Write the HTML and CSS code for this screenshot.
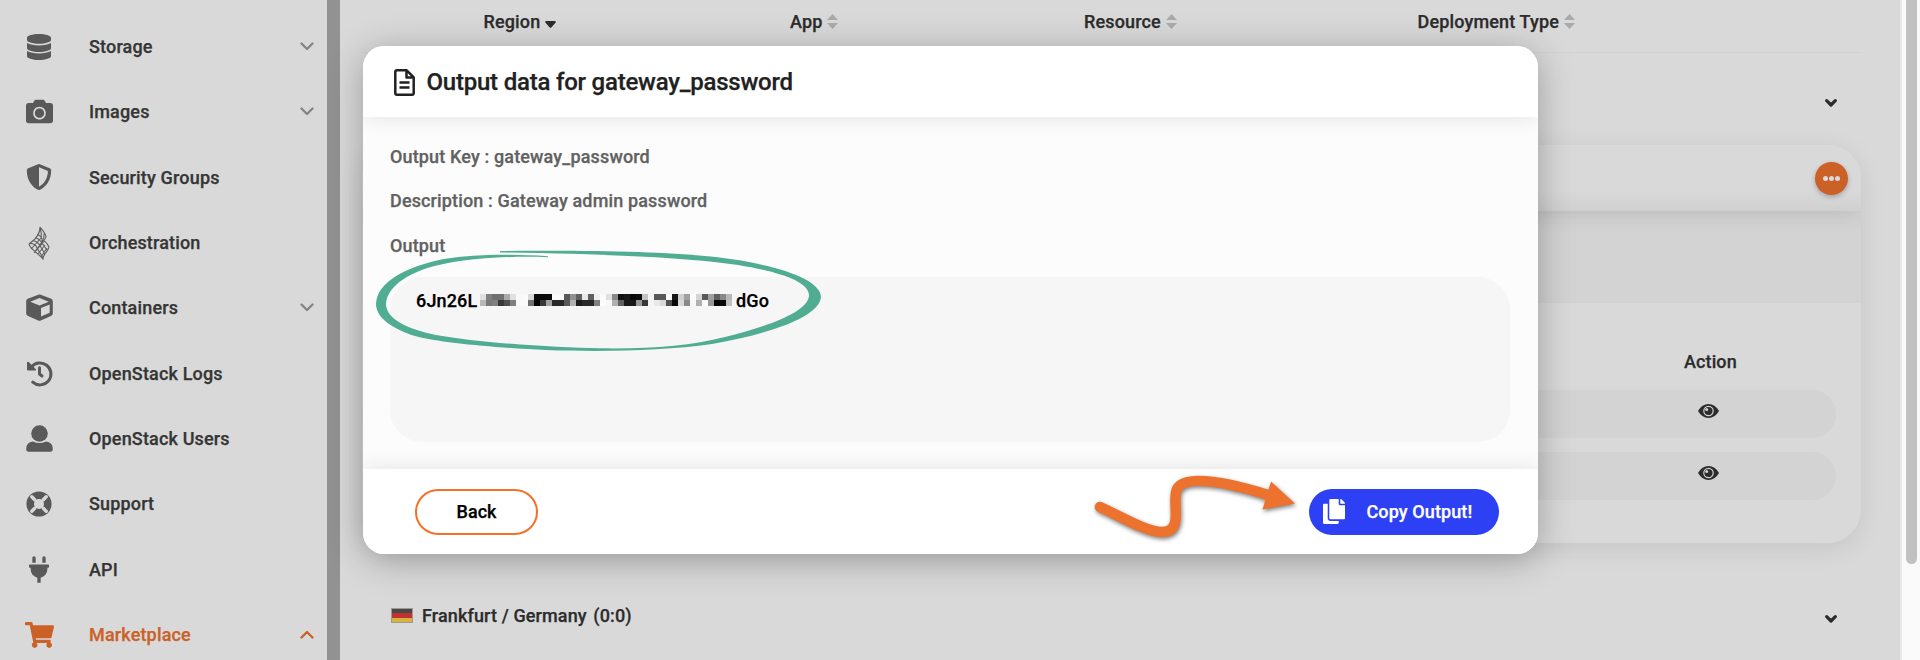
FILE: index.html
```html
<!DOCTYPE html>
<html lang="en">
<head>
<meta charset="utf-8">
<title>Marketplace</title>
<link rel="stylesheet" href="styles.css">
</head>
<body>
<div class="app">
  <nav class="sidebar">
    <a class="item"><span class="icon"><svg width="24" height="26" viewBox="0 0 448 512" preserveAspectRatio="none"><path d="M448 73.143v45.714C448 159.143 347.667 192 224 192S0 159.143 0 118.857V73.143C0 32.857 100.333 0 224 0s224 32.857 224 73.143zM448 176v102.857C448 319.143 347.667 352 224 352S0 319.143 0 278.857V176c48.125 33.143 136.208 48.572 224 48.572S399.874 209.143 448 176zm0 160v102.857C448 479.143 347.667 512 224 512S0 479.143 0 438.857V336c48.125 33.143 136.208 48.572 224 48.572S399.874 369.143 448 336z"/></svg></span><span class="label">Storage</span><svg class="chev" width="14" height="9" viewBox="0 0 14 9"><path d="M1.5 1.5 7 7 12.5 1.5"/></svg></a>
    <a class="item"><span class="icon"><svg width="27" height="27" viewBox="0 0 512 512"><path d="M512 144v288c0 26.500-21.500 48-48 48H48c-26.500 0-48-21.500-48-48V144c0-26.500 21.500-48 48-48h88l12.300-32.900c7-18.700 24.900-31.100 44.900-31.100h125.500c20 0 37.900 12.400 44.900 31.100L376 96h88c26.500 0 48 21.500 48 48zM376 288c0-66.200-53.800-120-120-120s-120 53.800-120 120 53.800 120 120 120 120-53.800 120-120zm-32 0c0 48.500-39.500 88-88 88s-88-39.500-88-88 39.500-88 88-88 88 39.500 88 88z"/></svg></span><span class="label">Images</span><svg class="chev" width="14" height="9" viewBox="0 0 14 9"><path d="M1.5 1.5 7 7 12.5 1.5"/></svg></a>
    <a class="item"><span class="icon"><svg width="26" height="26" viewBox="0 0 512 512"><path d="M466.500 83.700l-192-80a48.150 48.150 0 0 0-36.900 0l-192 80C27.700 91.100 16 108.600 16 128c0 198.500 114.500 335.700 221.500 380.300 11.800 4.900 25.100 4.900 36.900 0C360.100 472.600 496 349.300 496 128c0-19.400-11.700-36.900-29.500-44.300zM256.100 446.300l-.1-381 175.900 73.300c-3.300 151.400-82.100 261.100-175.800 307.700z"/></svg></span><span class="label">Security Groups</span></a>
    <a class="item"><span class="icon"><svg class="mesh" width="22" height="34" viewBox="0 0 22 34"><path d="M12 1c4 5 6 7 6 10M12 1c0 6-2 8-5 12L1 18M12 1c1 5 2 7 1 11L3 23M16 6c1 5-1 7-2 10L6 27M18 11l-4 7-6 6M1 18c0 4 9 9 14 15 0-5 5-7 6-12-2-4-5-7-8-7M1 18c3-2 5 0 7 2l7 12M4 15c3-1 5 1 7 3l6 10M7 12c3 0 5 2 7 5l5 7M9 9c3 0 4 1 5 4M8 25l6-8M10 28l7-9M13 31l6-9"/></svg></span><span class="label">Orchestration</span></a>
    <a class="item"><span class="icon"><svg width="27" height="27" viewBox="0 0 27 27"><path fill-rule="evenodd" d="M12.300.8q1.200-.6 2.400 0l10.600 4q1.500.7 1.500 2.200v12.600q0 1.500-1.400 2.200l-10.600 4.600q-1.300.5-2.600 0L1.600 21.800Q.2 21.100.2 19.600V7q0-1.500 1.500-2.200zM13.500 4 4.200 7.700l9.300 3.800 9.300-3.800zM15 14v8.500l8.700-3.800v-8.200z"/></svg></span><span class="label">Containers</span><svg class="chev" width="14" height="9" viewBox="0 0 14 9"><path d="M1.500 1.500 7 7 12.500 1.500"/></svg></a>
    <a class="item"><span class="icon"><svg class="line" width="27" height="27" viewBox="0 0 27 27"><path stroke-width="3" stroke-linecap="round" d="M5 7.500A11 11 0 1 1 6.700 22.200"/><path stroke-width="3" stroke-linecap="round" stroke-linejoin="round" d="M13.500 7.800V14L16 16"/><path class="solid" d="M1 2.200q.7-1 1.700-.2l7.200 7.200q.6 1-.6 1.200H1.800q-.8 0-.8-.8z"/></svg></span><span class="label">OpenStack Logs</span></a>
    <a class="item"><span class="icon"><svg width="27" height="27" viewBox="0 0 27 27"><circle cx="13.500" cy="8.500" r="8.300"/><path d="M7 16.500q6.500 3 13 0 6.800.7 6.800 7.500 0 2.700-2.500 2.700H2.700Q.2 26.700.2 24q0-6.800 6.800-7.500z"/></svg></span><span class="label">OpenStack Users</span></a>
    <a class="item"><span class="icon"><svg width="26" height="26" viewBox="0 0 26 26"><path fill-rule="evenodd" d="M13 .4a12.600 12.600 0 1 0 0 25.200 12.600 12.600 0 0 0 0-25.200zM13 8a5 5 0 1 1 0 10 5 5 0 0 1 0-10z"/><path class="cut" d="m8.700 8.700-2.900-2.900M17.300 8.700l2.900-2.900M8.700 17.300l-2.900 2.900M17.300 17.300l2.900 2.900"/></svg></span><span class="label">Support</span></a>
    <a class="item"><span class="icon"><svg width="20" height="27" viewBox="0 0 384 512"><path d="M320 32a32 32 0 0 0-64 0v96h64zm48 128H16A16 16 0 0 0 0 176v32a16 16 0 0 0 16 16h16v32a160.070 160.070 0 0 0 128 156.800V512h64v-99.200A160.070 160.070 0 0 0 352 256v-32h16a16 16 0 0 0 16-16v-32a16 16 0 0 0-16-16zM128 32a32 32 0 0 0-64 0v96h64z"/></svg></span><span class="label">API</span></a>
    <a class="item active"><span class="icon"><svg width="29" height="26" viewBox="0 0 576 512"><path d="M528.120 301.319l47.273-208C578.806 78.301 567.391 64 551.990 64H159.208l-9.166-44.810C147.758 8.021 137.930 0 126.529 0H24C10.745 0 0 10.745 0 24v16c0 13.255 10.745 24 24 24h69.883l70.248 343.435C147.325 417.100 136 435.222 136 456c0 30.928 25.072 56 56 56s56-25.072 56-56c0-15.674-6.447-29.835-16.824-40h209.647C430.447 426.165 424 440.326 424 456c0 30.928 25.072 56 56 56s56-25.072 56-56c0-22.172-12.888-41.332-31.579-50.405l5.517-24.276c3.413-15.018-8.002-29.319-23.403-29.319H218.117l-6.545-32h293.145c11.206 0 20.920-7.754 23.403-18.681z"/></svg></span><span class="label">Marketplace</span><svg class="chev" width="14" height="9" viewBox="0 0 14 9"><path d="M1.500 7.500 7 2 12.500 7.500"/></svg></a>
  </nav>
  <div class="gutter"></div>

  <main class="main">
    <header class="columns">
      <span class="col region">Region<svg width="11" height="7" viewBox="0 0 11 7"><path d="M1.200 0h8.600q1.500.3.700 1.700L6.500 6.200q-1 1-2 0L.5 1.700Q-.3.300 1.200 0z"/></svg></span>
      <span class="col app-col">App<svg class="sort" width="11" height="15" viewBox="0 0 11 15"><path d="M5.500 0 11 6H0zM0 9h11l-5.500 6z"/></svg></span>
      <span class="col resource">Resource<svg class="sort" width="11" height="15" viewBox="0 0 11 15"><path d="M5.500 0 11 6H0zM0 9h11l-5.500 6z"/></svg></span>
      <span class="col deployment">Deployment Type<svg class="sort" width="11" height="15" viewBox="0 0 11 15"><path d="M5.500 0 11 6H0zM0 9h11l-5.500 6z"/></svg></span>
    </header>
    <div class="group first"><svg class="fold" width="12" height="8" viewBox="0 0 12 8"><path d="M1.700 1.700 6 6l4.300-4.300"/></svg></div>
    <section class="card">
      <div class="card-head"><button class="more"><i></i><i></i><i></i></button></div>
      <div class="card-band"></div>
      <div class="card-body">
        <div class="action">Action</div>
        <div class="row"><svg width="21" height="14" viewBox="0 0 21 14"><path d="M0 7q4-7 10.500-7T21 7q-4 7-10.500 7T0 7z"/><circle class="ring" cx="10.500" cy="7" r="4.700"/><circle class="glint" cx="8.700" cy="5.400" r="1.500"/></svg></div>
        <div class="row"><svg width="21" height="14" viewBox="0 0 21 14"><path d="M0 7q4-7 10.500-7T21 7q-4 7-10.500 7T0 7z"/><circle class="ring" cx="10.500" cy="7" r="4.700"/><circle class="glint" cx="8.700" cy="5.400" r="1.500"/></svg></div>
      </div>
    </section>
    <div class="group last">
      <span class="flag"><i></i><i></i><i></i></span><span class="place">Frankfurt / Germany <span class="count">(0:0)</span></span>
      <svg class="fold" width="12" height="8" viewBox="0 0 12 8"><path d="M1.700 1.700 6 6l4.300-4.300"/></svg>
    </div>
  </main>
  <div class="scroll"><div class="thumb"></div></div>
</div>

<div class="modal">
  <header class="modal-head">
    <svg width="21" height="27" viewBox="0 0 21 27"><path d="M3 1.300h9.700l7 7V24q0 1.700-1.700 1.700H3Q1.300 25.700 1.300 24V3Q1.300 1.300 3 1.300zM12.500 1.500v7h7M5.500 13.500h10M5.500 18.500h10"/></svg>
    <h1>Output data for gateway_password</h1>
  </header>
  <div class="modal-body">
    <p>Output Key : gateway_password</p>
    <p class="desc">Description : Gateway admin password</p>
    <p>Output</p>
    <div class="output"><span class="head">6Jn26L</span><svg class="mask" width="258" height="12" viewBox="0 0 43 2" shape-rendering="crispEdges"></svg><span class="tail">dGo</span></div>
  </div>
  <footer class="modal-foot">
    <button class="back">Back</button>
    <button class="copy"><svg width="22" height="25" viewBox="0 0 448 512" preserveAspectRatio="none"><path d="M320 448v40c0 13.255-10.745 24-24 24H24c-13.255 0-24-10.745-24-24V120c0-13.255 10.745-24 24-24h72v296c0 30.879 25.121 56 56 56h168zm0-344V0H152c-13.255 0-24 10.745-24 24v368c0 13.255 10.745 24 24 24h272c13.255 0 24-10.745 24-24V128H344c-13.200 0-24-10.800-24-24zm120.971-31.029L375.029 7.029A24 24 0 0 0 358.059 0H352v96h96v-6.059a24 24 0 0 0-7.029-16.970z"/></svg><span>Copy Output!</span></button>
  </footer>
</div>

<svg class="marks" width="1920" height="660" viewBox="0 0 1920 660">
  <path class="loop" d="M500 251C600 250 670 252 716 257C775 264 821 279 821 297C819 319 762 335 712 344C664 351 600 352 546 350C500 348 440 343 415 336C393 329 376 318 376 304C377 282 405 267 444 259C475 254 510 254 548 256.200V257.200C510 256 475 258 448 263C410 270 387 286 386 304C386 318 406 329 436 335C480 343 555 347.500 600 348.300C650 349 690 346 725 337C765 327 807 313 809 296C810 281 775 271 738 265C685 257 600 254 500 252.500Z"/>
  <g class="arrow"><path class="shaft" d="M1100 507C1120 516 1146 532 1162 532C1185 532 1171 501 1177 489C1184 475 1220 480 1268 495"/><path d="M1271 481.500 1295 503.500 1262.500 509.500Z"/></g>
</svg>
<script src="mask.js"></script>
</body>
</html>
```
FILE: mask.js
```js
// Grey levels (hex) of the blocks that hide the middle of the password.
const rows = [
  "e0 80 70 70 aa e0 f8 fa d8 0a 0a 0c fb fb 58 90 60 e8 60 f0 fb e0 88 10 18 08 0c c4 f4 58 58 fb 18 d0 a0 fb d4 58 a0 60 88 b8 f7",
  "b8 78 80 38 50 80 fa fa 70 04 38 a0 28 28 58 b0 1c 28 28 80 fc f8 b0 60 18 18 98 38 f4 e8 d8 50 08 d8 88 f7 b0 fa 98 04 08 c0 f7"
];
const mask = document.querySelector(".mask");
rows.forEach((row, y) => row.split(" ").forEach((v, x) => {
  const r = document.createElementNS("http://www.w3.org/2000/svg", "rect");
  r.setAttribute("x", x);
  r.setAttribute("y", y);
  r.setAttribute("width", 1);
  r.setAttribute("height", 1);
  r.setAttribute("fill", "#" + v + v + v);
  mask.appendChild(r);
}));
```
FILE: styles.css
```css
* { box-sizing: border-box; }
body { margin: 0; width: 1920px; height: 660px; overflow: hidden; position: relative; background: #d9d9d9; font-family: Roboto, sans-serif; font-weight: 500; font-size: 18px; color: #2c2c2c; -webkit-text-stroke: .25px; }
svg { display: block; flex: none; }
button { border: 0; padding: 0; font: inherit; }
.app { display: flex; height: 660px; }

.sidebar { width: 327px; padding-top: 14px; }
.item { display: flex; align-items: center; height: 65.33px; padding-right: 13px; color: #353535; }
.icon { width: 78px; display: flex; justify-content: center; margin-right: 11px; fill: #595959; }
.label { flex: 1; letter-spacing: .16px; }
.chev { fill: none; stroke: #848484; stroke-width: 2.3; stroke-linecap: round; stroke-linejoin: round; }
.line { fill: none; stroke: #595959; }
.line .solid { fill: #595959; stroke: none; }
.mesh { fill: none; stroke: #606060; stroke-width: 1.1; }
.cut { stroke: #d9d9d9; stroke-width: 3.4; stroke-linecap: round; }
.active { color: #cb6127; }
.active .icon { fill: #cb6127; }
.active .chev { stroke: #cb6127; }
.gutter { width: 13px; background: #929292; }

.main { flex: 1; height: 660px; overflow: hidden; padding: 0 39px 0 22px; display: flex; flex-direction: column; }
.columns { height: 53px; flex: none; padding: 0 0 10px 121.500px; border-bottom: 1px solid #d3d3d3; display: flex; align-items: center; letter-spacing: .15px; }
.col { display: flex; align-items: center; }
.col svg { margin-left: 5px; fill: #2c2c2c; }
.region svg { margin-top: 7px; }
.col .sort { fill: #aaa; }
.region { width: 306.500px; }
.app-col { width: 294px; }
.resource { width: 333.500px; }
.group { display: flex; flex: none; align-items: center; padding: 0 24.500px 0 29px; }
.first { height: 92px; padding-top: 8px; }
.last { height: 145px; }
.fold { margin-left: auto; fill: none; stroke: #2c2c2c; stroke-width: 3.200; stroke-linecap: round; stroke-linejoin: round; }
.last .fold { margin-top: 6px; }
.card { height: 398px; flex: none; border-radius: 33px; overflow: hidden; background: #d9d9d9; box-shadow: 0 6px 26px rgba(0,0,0,.09); }
.card-head { position: relative; height: 66px; display: flex; align-items: center; justify-content: flex-end; padding-right: 13px; box-shadow: 0 2px 22px rgba(0,0,0,.12); background: linear-gradient(#d9d9d9 70%, #d0d0d0); }
.more { width: 33px; height: 33px; border-radius: 50%; background: #cb6127; display: flex; align-items: center; justify-content: center; gap: 1.300px; box-shadow: 0 2px 5px rgba(0,0,0,.25); }
.more i { width: 5px; height: 5px; border-radius: 50%; background: #d9d9d9; }
.card-band { height: 92px; background: #d3d3d3; }
.card-body { padding: 46px 25px 0 0; }
.action { margin: 0 99px 15px auto; width: 53px; line-height: 26px; letter-spacing: .1px; }
.row { height: 48px; margin-bottom: 13.500px; padding: 14px 117.500px 0 0; display: flex; justify-content: flex-end; background: #d3d3d3; border-radius: 24px; fill: #2c2c2c; }
.ring { fill: none; stroke: #d3d3d3; stroke-width: 1.200; }
.glint { fill: #d3d3d3; }
.flag { width: 22px; height: 15px; border: 1px solid #a19a8c; display: flex; flex-direction: column; margin-right: 9px; }
.flag i { flex: 1; background: #484848; }
.flag i:nth-child(2) { background: #c23030; }
.flag i:nth-child(3) { background: #d5b440; }
.place { letter-spacing: .12px; }
.count { margin-left: 2px; }
.scroll { width: 20px; padding-left: 4px; background: #fafafa; border-left: 2px solid #e8e8e8; }
.thumb { width: 11px; height: 564px; background: #c1c1c1; border-radius: 0 0 6px 6px; }

.modal { position: absolute; left: 362.500px; top: 46px; width: 1175.500px; height: 508px; display: flex; flex-direction: column; border-radius: 21px; overflow: hidden; background: #fcfcfc; box-shadow: 0 6px 36px rgba(0,0,0,.28); }
.modal-head { height: 71px; display: flex; align-items: center; padding-left: 31px; gap: 12px; background: #fff; box-shadow: 0 2px 20px rgba(0,0,0,.09); }
.modal-head svg { margin-top: 2px; fill: none; stroke: #212121; stroke-width: 2.500; stroke-linejoin: round; }
h1 { margin: 0; font-size: 24px; font-weight: 500; color: #212121; letter-spacing: -.22px; }
.modal-body { flex: 1; padding: 28px 28px 0 27.500px; }
p { margin: 0 0 20.300px; line-height: 24px; color: #616161; letter-spacing: .14px; }
.output { height: 165px; margin-top: -1px; padding: 17px 0 0 26px; border-radius: 32px; background: #f6f6f6; color: #000; display: flex; line-height: 13px; letter-spacing: .15px; }
.output svg { margin-left: 2px; }
.head { width: 62px; }
.tail { margin-left: -2px; }
.modal-foot { height: 85px; display: flex; align-items: center; justify-content: space-between; padding: 0 39px 0 52.500px; background: #fff; box-shadow: 0 -2px 20px rgba(0,0,0,.09); }
.back { width: 123px; height: 46px; border: 2.500px solid #f47127; border-radius: 23px; background: #fff; color: #000; }
.copy { width: 190px; height: 46px; border-radius: 23px; background: #2d40f3; color: #fff; display: flex; align-items: center; padding-left: 14px; gap: 21.500px; letter-spacing: .1px; }
.copy svg { fill: #fff; }

.marks { position: absolute; left: 0; top: 0; pointer-events: none; }
.loop { fill: #50ad91; }
.arrow { fill: #ec722e; filter: drop-shadow(1px 2px 2px rgba(0,0,0,.5)); }
.shaft { fill: none; stroke: #ec722e; stroke-width: 10.500; stroke-linecap: round; }
```
